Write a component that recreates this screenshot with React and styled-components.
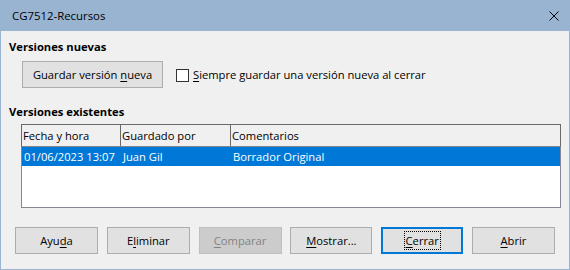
import React from "react";
import styled, { createGlobalStyle } from "styled-components";

const GlobalStyle = createGlobalStyle`
  html, body {
    margin: 0;
    padding: 0;
    background: #f0f0f0;
  }
  body {
    font-family: "Open Sans", "Noto Sans", sans-serif;
    font-size: 11.2px;
    color: #000000;
  }
`;

const Window = styled.div`
  width: 570px;
  height: 270px;
  box-sizing: border-box;
  border: 1px solid #99b4d1;
  border-top: none;
  background: #f0f0f0;
  display: flex;
  flex-direction: column;
  overflow: hidden;
`;

const TitleBar = styled.div`
  height: 31px;
  margin: 0 -1px;
  background: #99b4d1;
  display: flex;
  align-items: center;
  justify-content: space-between;
  padding: 0 11px 0 12px;
  flex-shrink: 0;
`;

const Title = styled.span`
  font-size: 11.4px;
  line-height: 16px;
`;

const CloseIcon = styled.svg`
  width: 10px;
  height: 10px;
  margin-top: 1px;
`;

const Body = styled.div`
  flex: 1;
  display: flex;
  flex-direction: column;
  padding: 8px 8px 0 8px;
`;

const SectionLabel = styled.div`
  font-weight: 700;
  line-height: 16px;
  margin-top: ${(p) => p.top || 0}px;
`;

const NewRow = styled.div`
  display: flex;
  align-items: center;
  margin: 6px 0 0 13px;
  gap: 13px;
`;

const Button = styled.button`
  font: inherit;
  height: 27px;
  width: ${(p) => p.w || 82}px;
  padding: 0;
  box-sizing: border-box;
  background: ${(p) => (p.disabled ? "#cccccc" : "#e1e1e1")};
  color: ${(p) => (p.disabled ? "#838383" : "#000000")};
  border: ${(p) => (p.focused ? "2px solid #0078d7" : p.disabled ? "1px solid #bfbfbf" : "1px solid #adadad")};
  display: flex;
  align-items: center;
  justify-content: center;
  cursor: default;
`;

const FocusText = styled.span`
  outline: 1px dotted #000000;
  outline-offset: 0;
  padding: 0 1px;
  line-height: 17px;
`;

const Key = styled.span`
  text-decoration: underline;
  text-underline-offset: 2px;
`;

const CheckLabel = styled.label`
  display: flex;
  align-items: center;
  gap: 4px;
`;

const Box = styled.span`
  width: 13px;
  height: 13px;
  box-sizing: border-box;
  border: 1px solid #333333;
  background: #ffffff;
  margin-top: 1px;
`;

const Table = styled.div`
  margin: 4px 0 0 12px;
  width: 540px;
  height: 84px;
  box-sizing: border-box;
  background: #ffffff;
  border: 1px solid #828790;
  display: flex;
  flex-direction: column;
`;

const HeaderRow = styled.div`
  display: grid;
  grid-template-columns: 99px 110px 1fr;
  height: 21px;
  background: #f0f0f0;
  border-bottom: 1px solid #828790;
  margin: -1px -1px 0 -1px;
  border-top: 1px solid #696969;
  border-left: 1px solid #696969;
  border-right: 1px solid #696969;
`;

const HeaderCell = styled.div`
  display: flex;
  align-items: center;
  padding-left: 1px;
  border-right: ${(p) => (p.last ? "none" : "1px solid #696969")};
`;

const DataRow = styled.div`
  display: grid;
  grid-template-columns: 99px 110px 1fr;
  height: 19px;
  background: ${(p) => (p.selected ? "#0078d7" : "transparent")};
  color: ${(p) => (p.selected ? "#ffffff" : "#000000")};
`;

const DataCell = styled.div`
  display: flex;
  align-items: center;
  padding-left: 2px;
  white-space: nowrap;
`;

const ButtonBar = styled.div`
  display: flex;
  justify-content: space-between;
  margin: 19px 6px 0 6px;
`;

export default function App() {
  return (
    <>
      <GlobalStyle />
      <Window>
        <TitleBar>
          <Title>CG7512-Recursos</Title>
          <CloseIcon viewBox="0 0 10 10">
            <path d="M0.5 0.5 L9.5 9.5 M9.5 0.5 L0.5 9.5" stroke="#000" strokeWidth="1" fill="none" />
          </CloseIcon>
        </TitleBar>
        <Body>
          <SectionLabel>Versiones nuevas</SectionLabel>
          <NewRow>
            <Button w={141}>
              <span>
                Guardar versión <Key>n</Key>ueva
              </span>
            </Button>
            <CheckLabel>
              <Box />
              <span>
                <Key>S</Key>iempre guardar una versión nueva al cerrar
              </span>
            </CheckLabel>
          </NewRow>
          <SectionLabel top={16}>Versiones existentes</SectionLabel>
          <Table>
            <HeaderRow>
              <HeaderCell>Fecha y hora</HeaderCell>
              <HeaderCell>Guardado por</HeaderCell>
              <HeaderCell last>Comentarios</HeaderCell>
            </HeaderRow>
            <DataRow selected>
              <DataCell>01/06/2023 13:07</DataCell>
              <DataCell>Juan Gil</DataCell>
              <DataCell>Borrador Original</DataCell>
            </DataRow>
          </Table>
          <ButtonBar>
            <Button w={83}>
              <span>
                Ayu<Key>d</Key>a
              </span>
            </Button>
            <Button w={83}>
              <span>
                E<Key>l</Key>iminar
              </span>
            </Button>
            <Button w={83} disabled>
              <span>
                <Key>C</Key>omparar
              </span>
            </Button>
            <Button w={82}>
              <span>
                <Key>M</Key>ostrar...
              </span>
            </Button>
            <Button w={82} focused>
              <FocusText>
                <Key>C</Key>errar
              </FocusText>
            </Button>
            <Button w={83}>
              <span>
                <Key>A</Key>brir
              </span>
            </Button>
          </ButtonBar>
        </Body>
      </Window>
    </>
  );
}
